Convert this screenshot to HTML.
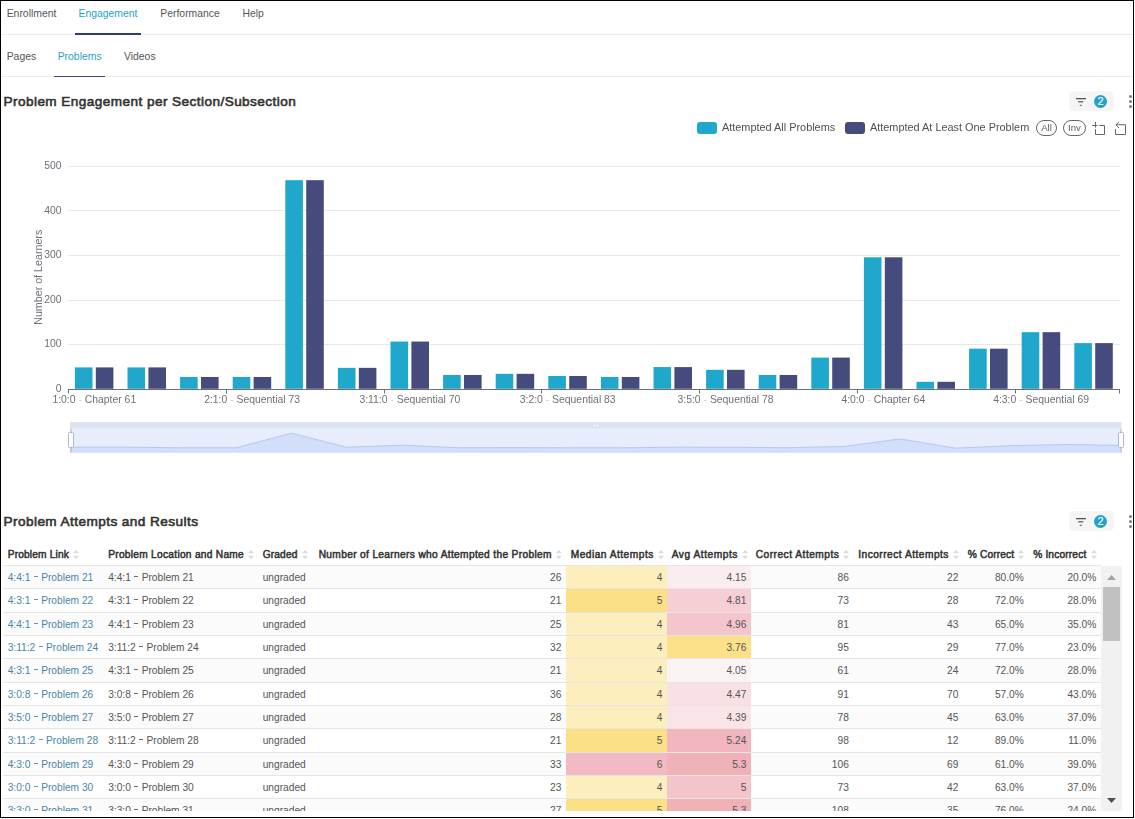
<!DOCTYPE html>
<html><head><meta charset="utf-8">
<style>
html,body{margin:0;padding:0;background:#fff;width:1135px;height:819px;overflow:hidden;position:relative;font-family:"Liberation Sans",sans-serif;}
.abs{position:absolute;white-space:nowrap;}
.frame{position:absolute;left:0;top:0;width:1134px;height:818px;border:1px solid #000;box-sizing:border-box;pointer-events:none;z-index:10}
.tab{position:absolute;font-size:10.4px;color:#555;white-space:nowrap;line-height:12px}
.tab.act{color:#25A3CA}
.line{position:absolute;height:1px;background:#ECECEC}
.ul{position:absolute;height:2px;background:#2F3B6E}
.title{position:absolute;font-size:13.6px;letter-spacing:0.43px;font-weight:normal;-webkit-text-stroke:0.6px #333;color:#333;white-space:nowrap;line-height:14px}
.fbtn{position:absolute;width:45px;height:20px;background:#F5F5F5;border-radius:5px}
.badge{position:absolute;width:13px;height:13px;border-radius:50%;background:#21A3C9;color:#fff;font-size:11px;text-align:center;line-height:13.5px;-webkit-text-stroke:0.1px #fff}
.dot{position:absolute;width:3px;height:3px;border-radius:50%;background:#73808C}
svg text.ax{font-family:"Liberation Sans",sans-serif;font-size:10.4px;fill:#6E7079}
.leg{position:absolute;will-change:transform;font-size:10.9px;color:#505050;white-space:nowrap;line-height:12px}
.sw{position:absolute;width:20px;height:12px;border-radius:3px}
.pill{position:absolute;will-change:transform;border:1px solid #666;border-radius:8px;box-sizing:border-box;font-size:9.6px;color:#606060;text-align:center;line-height:14px}
.th{position:absolute;top:544px;height:22px;line-height:22px;font-size:10.2px;letter-spacing:0.15px;font-weight:normal;-webkit-text-stroke:0.5px #333;color:#333;padding-left:4.7px;box-sizing:border-box;white-space:nowrap}
.si{display:inline-block;margin-left:4px;vertical-align:-1px}
.tr{position:absolute;left:3px;width:1098px;height:23.35px;border-bottom:1px solid #E5E5E5;box-sizing:border-box}
.td{position:absolute;top:0;bottom:0;line-height:24.5px;font-size:10.2px;color:#555;padding:0 4.7px;box-sizing:border-box;white-space:nowrap;overflow:hidden;margin-left:-3px}
.td.r{text-align:right}
.dsh{display:inline-block;width:3.8px;height:0.9px;background:currentColor;vertical-align:4.0px;margin:0 3.4px 0 3.6px;opacity:0.85}
.td.lk{color:#4885AB}
.hb{position:absolute;left:3px;top:565px;width:1098px;height:1px;background:#E5E5E5}
.sb{position:absolute;left:1101px;top:566px;width:21px;height:245px;background:#F1F1F1}
.thumb{position:absolute;left:1103px;top:587px;width:17px;height:54px;background:#C1C1C1}
</style></head><body>
<div class="frame"></div>
<div class="tab" style="left:6.7px;top:8px">Enrollment</div>
<div class="tab act" style="left:78.5px;top:8px">Engagement</div>
<div class="tab" style="left:160.3px;top:8px">Performance</div>
<div class="tab" style="left:242.5px;top:8px">Help</div>
<div class="line" style="left:1px;top:34px;width:1132px"></div>
<div class="ul" style="left:75px;top:33px;width:66px"></div>
<div class="tab" style="left:6.7px;top:51px">Pages</div>
<div class="tab act" style="left:57.7px;top:51px">Problems</div>
<div class="tab" style="left:124px;top:51px">Videos</div>
<div class="line" style="left:1px;top:76px;width:1132px"></div>
<div class="ul" style="left:54px;top:76px;width:51px;height:1px;background:#3B467A"></div>
<div class="title" style="left:3.5px;top:95px">Problem Engagement per Section/Subsection</div>
<div class="fbtn" style="left:1069px;top:91px"></div>
<svg class="abs" style="left:1075px;top:97px" width="12" height="10" viewBox="0 0 12 10"><rect x="1" y="1" width="10" height="1.3" fill="#555"/><rect x="3.2" y="4.2" width="5.1" height="1.2" fill="#555"/><rect x="4.8" y="7.8" width="2" height="1" fill="#555"/></svg>
<div class="badge" style="left:1094px;top:95px">2</div>
<div class="dot" style="left:1129px;top:95px"></div>
<div class="dot" style="left:1129px;top:100px"></div>
<div class="dot" style="left:1129px;top:105px"></div>
<div class="sw" style="left:697px;top:122px;background:#20A7CC"></div>
<div class="leg" style="left:721.5px;top:120.5px">Attempted All Problems</div>
<div class="sw" style="left:845px;top:122px;background:#454C7D"></div>
<div class="leg" style="left:869.5px;top:120.5px">Attempted At Least One Problem</div>
<div class="pill" style="left:1036px;top:120px;width:21px;height:16px">All</div>
<div class="pill" style="left:1063px;top:120px;width:23px;height:16px">Inv</div>
<svg class="abs" style="left:0;top:0" width="1135" height="140" viewBox="0 0 1135 140">
<path d="M1092.3 125.5 H1097.6 M1095.5 122 V127.6 M1099.3 125.5 H1104.5 V134.5 H1095.5 V129.1" fill="none" stroke="#666" stroke-width="1"/>
<path d="M1115.5 129.1 V134.5 H1125.5 V124.7 H1116 M1119 121.8 L1115.9 124.9 L1119 128" fill="none" stroke="#666" stroke-width="1"/>
</svg>
<svg class="abs" style="left:0;top:0;will-change:transform" width="1135" height="470" viewBox="0 0 1135 470">
<line x1="68.0" y1="344.5" x2="1120.0" y2="344.5" stroke="#E4E9F2" stroke-width="1"/>
<line x1="68.0" y1="300.5" x2="1120.0" y2="300.5" stroke="#E4E9F2" stroke-width="1"/>
<line x1="68.0" y1="255.5" x2="1120.0" y2="255.5" stroke="#E4E9F2" stroke-width="1"/>
<line x1="68.0" y1="210.5" x2="1120.0" y2="210.5" stroke="#E4E9F2" stroke-width="1"/>
<line x1="68.0" y1="166.5" x2="1120.0" y2="166.5" stroke="#E4E9F2" stroke-width="1"/>
<rect x="74.90" y="367.40" width="17.6" height="21.40" fill="#20A7CC"/>
<rect x="95.80" y="367.40" width="17.6" height="21.40" fill="#454C7D"/>
<rect x="127.50" y="367.40" width="17.6" height="21.40" fill="#20A7CC"/>
<rect x="148.40" y="367.40" width="17.6" height="21.40" fill="#454C7D"/>
<rect x="180.10" y="376.99" width="17.6" height="11.81" fill="#20A7CC"/>
<rect x="201.00" y="376.99" width="17.6" height="11.81" fill="#454C7D"/>
<rect x="232.70" y="376.99" width="17.6" height="11.81" fill="#20A7CC"/>
<rect x="253.60" y="376.99" width="17.6" height="11.81" fill="#454C7D"/>
<rect x="285.30" y="180.17" width="17.6" height="208.63" fill="#20A7CC"/>
<rect x="306.20" y="180.17" width="17.6" height="208.63" fill="#454C7D"/>
<rect x="337.90" y="367.85" width="17.6" height="20.95" fill="#20A7CC"/>
<rect x="358.80" y="367.85" width="17.6" height="20.95" fill="#454C7D"/>
<rect x="390.50" y="341.55" width="17.6" height="47.25" fill="#20A7CC"/>
<rect x="411.40" y="341.55" width="17.6" height="47.25" fill="#454C7D"/>
<rect x="443.10" y="374.98" width="17.6" height="13.82" fill="#20A7CC"/>
<rect x="464.00" y="374.98" width="17.6" height="13.82" fill="#454C7D"/>
<rect x="495.70" y="373.82" width="17.6" height="14.98" fill="#20A7CC"/>
<rect x="516.60" y="373.82" width="17.6" height="14.98" fill="#454C7D"/>
<rect x="548.30" y="376.01" width="17.6" height="12.79" fill="#20A7CC"/>
<rect x="569.20" y="376.01" width="17.6" height="12.79" fill="#454C7D"/>
<rect x="600.90" y="376.99" width="17.6" height="11.81" fill="#20A7CC"/>
<rect x="621.80" y="376.99" width="17.6" height="11.81" fill="#454C7D"/>
<rect x="653.50" y="367.09" width="17.6" height="21.71" fill="#20A7CC"/>
<rect x="674.40" y="367.09" width="17.6" height="21.71" fill="#454C7D"/>
<rect x="706.10" y="369.81" width="17.6" height="18.99" fill="#20A7CC"/>
<rect x="727.00" y="369.81" width="17.6" height="18.99" fill="#454C7D"/>
<rect x="758.70" y="374.98" width="17.6" height="13.82" fill="#20A7CC"/>
<rect x="779.60" y="374.98" width="17.6" height="13.82" fill="#454C7D"/>
<rect x="811.30" y="357.59" width="17.6" height="31.21" fill="#20A7CC"/>
<rect x="832.20" y="357.59" width="17.6" height="31.21" fill="#454C7D"/>
<rect x="863.90" y="257.29" width="17.6" height="131.51" fill="#20A7CC"/>
<rect x="884.80" y="257.29" width="17.6" height="131.51" fill="#454C7D"/>
<rect x="916.50" y="381.80" width="17.6" height="7.00" fill="#20A7CC"/>
<rect x="937.40" y="381.80" width="17.6" height="7.00" fill="#454C7D"/>
<rect x="969.10" y="348.68" width="17.6" height="40.12" fill="#20A7CC"/>
<rect x="990.00" y="348.68" width="17.6" height="40.12" fill="#454C7D"/>
<rect x="1021.70" y="332.18" width="17.6" height="56.62" fill="#20A7CC"/>
<rect x="1042.60" y="332.18" width="17.6" height="56.62" fill="#454C7D"/>
<rect x="1074.30" y="343.11" width="17.6" height="45.69" fill="#20A7CC"/>
<rect x="1095.20" y="343.11" width="17.6" height="45.69" fill="#454C7D"/>
<line x1="68.0" y1="389.5" x2="1120.0" y2="389.5" stroke="#6E7079" stroke-width="1"/>
<line x1="68.5" y1="389.5" x2="68.5" y2="393.5" stroke="#6E7079" stroke-width="1"/>
<line x1="226.5" y1="389.5" x2="226.5" y2="393.5" stroke="#6E7079" stroke-width="1"/>
<line x1="384.5" y1="389.5" x2="384.5" y2="393.5" stroke="#6E7079" stroke-width="1"/>
<line x1="541.5" y1="389.5" x2="541.5" y2="393.5" stroke="#6E7079" stroke-width="1"/>
<line x1="699.5" y1="389.5" x2="699.5" y2="393.5" stroke="#6E7079" stroke-width="1"/>
<line x1="857.5" y1="389.5" x2="857.5" y2="393.5" stroke="#6E7079" stroke-width="1"/>
<line x1="1015.5" y1="389.5" x2="1015.5" y2="393.5" stroke="#6E7079" stroke-width="1"/>
<line x1="1119.5" y1="389.5" x2="1119.5" y2="393.5" stroke="#6E7079" stroke-width="1"/>
<text x="61.5" y="391.9" text-anchor="end" class="ax">0</text>
<text x="61.5" y="347.3" text-anchor="end" class="ax">100</text>
<text x="61.5" y="302.7" text-anchor="end" class="ax">200</text>
<text x="61.5" y="258.2" text-anchor="end" class="ax">300</text>
<text x="61.5" y="213.6" text-anchor="end" class="ax">400</text>
<text x="61.5" y="169.0" text-anchor="end" class="ax">500</text>
<text x="94.3" y="403.0" text-anchor="middle" class="ax">1:0:0 <tspan fill-opacity="0.35">-</tspan> Chapter 61</text>
<text x="252.1" y="403.0" text-anchor="middle" class="ax">2:1:0 <tspan fill-opacity="0.35">-</tspan> Sequential 73</text>
<text x="409.9" y="403.0" text-anchor="middle" class="ax">3:11:0 <tspan fill-opacity="0.35">-</tspan> Sequential 70</text>
<text x="567.7" y="403.0" text-anchor="middle" class="ax">3:2:0 <tspan fill-opacity="0.35">-</tspan> Sequential 83</text>
<text x="725.5" y="403.0" text-anchor="middle" class="ax">3:5:0 <tspan fill-opacity="0.35">-</tspan> Sequential 78</text>
<text x="883.3" y="403.0" text-anchor="middle" class="ax">4:0:0 <tspan fill-opacity="0.35">-</tspan> Chapter 64</text>
<text x="1041.1" y="403.0" text-anchor="middle" class="ax">4:3:0 <tspan fill-opacity="0.35">-</tspan> Sequential 69</text>
<text transform="translate(41.5,277.3) rotate(-90)" text-anchor="middle" class="ax" style="font-size:10.7px">Number of Learners</text>
<rect x="70.0" y="422" width="1051.5" height="6.7" fill="#DDE3F1"/>
<rect x="70.0" y="428.7" width="1051.5" height="24" fill="#E7EDFC"/>
<polygon points="70.0,452.7 70.0,447.1 125.3,447.1 180.7,447.8 236.0,447.8 291.4,433.2 346.7,447.2 402.1,445.2 457.4,447.7 512.7,447.6 568.1,447.8 623.4,447.8 678.8,447.1 734.1,447.3 789.4,447.7 844.8,446.4 900.1,438.9 955.5,448.2 1010.8,445.7 1066.2,444.5 1121.5,445.3 1121.5,452.7" fill="#D2DEFA"/>
<polyline points="70.0,447.1 125.3,447.1 180.7,447.8 236.0,447.8 291.4,433.2 346.7,447.2 402.1,445.2 457.4,447.7 512.7,447.6 568.1,447.8 623.4,447.8 678.8,447.1 734.1,447.3 789.4,447.7 844.8,446.4 900.1,438.9 955.5,448.2 1010.8,445.7 1066.2,444.5 1121.5,445.3" fill="none" stroke="#B5C8F2" stroke-width="1"/>
<line x1="71.0" y1="428.7" x2="71.0" y2="452.7" stroke="#ACB8D1" stroke-width="1"/>
<rect x="68.5" y="432.5" width="5" height="15" rx="1" fill="#fff" stroke="#ACB8D1" stroke-width="1"/>
<line x1="1121.0" y1="428.7" x2="1121.0" y2="452.7" stroke="#ACB8D1" stroke-width="1"/>
<rect x="1118.5" y="432.5" width="5" height="15" rx="1" fill="#fff" stroke="#ACB8D1" stroke-width="1"/>
<circle cx="594.5" cy="425.2" r="0.8" fill="#fff"/><circle cx="597.5" cy="425.2" r="0.8" fill="#fff"/>
</svg>
<div class="title" style="left:3.5px;top:515px">Problem Attempts and Results</div>
<div class="fbtn" style="left:1069px;top:511px"></div>
<svg class="abs" style="left:1075px;top:517px" width="12" height="10" viewBox="0 0 12 10"><rect x="1" y="1" width="10" height="1.3" fill="#555"/><rect x="3.2" y="4.2" width="5.1" height="1.2" fill="#555"/><rect x="4.8" y="7.8" width="2" height="1" fill="#555"/></svg>
<div class="badge" style="left:1094px;top:515px">2</div>
<div class="dot" style="left:1129px;top:515px"></div>
<div class="dot" style="left:1129px;top:520px"></div>
<div class="dot" style="left:1129px;top:525px"></div>
<div class="th" style="left:3px;width:100.5px;letter-spacing:0.15px">Problem Link<svg class="si" style="margin-left:4.15px" width="6" height="9" viewBox="0 0 6 9"><path d="M3 0 L6 3.3 L0 3.3Z M3 9 L6 5.7 L0 5.7Z" fill="#DADADA"/></svg></div><div class="th" style="left:103.5px;width:154.5px;letter-spacing:0.27px">Problem Location and Name<svg class="si" style="margin-left:4.03px" width="6" height="9" viewBox="0 0 6 9"><path d="M3 0 L6 3.3 L0 3.3Z M3 9 L6 5.7 L0 5.7Z" fill="#DADADA"/></svg></div><div class="th" style="left:258px;width:56px;letter-spacing:0.15px">Graded<svg class="si" style="margin-left:4.15px" width="6" height="9" viewBox="0 0 6 9"><path d="M3 0 L6 3.3 L0 3.3Z M3 9 L6 5.7 L0 5.7Z" fill="#DADADA"/></svg></div><div class="th" style="left:314px;width:252px;letter-spacing:0.33px">Number of Learners who Attempted the Problem<svg class="si" style="margin-left:3.97px" width="6" height="9" viewBox="0 0 6 9"><path d="M3 0 L6 3.3 L0 3.3Z M3 9 L6 5.7 L0 5.7Z" fill="#DADADA"/></svg></div><div class="th" style="left:566px;width:101px;letter-spacing:0.48px">Median Attempts<svg class="si" style="margin-left:3.82px" width="6" height="9" viewBox="0 0 6 9"><path d="M3 0 L6 3.3 L0 3.3Z M3 9 L6 5.7 L0 5.7Z" fill="#DADADA"/></svg></div><div class="th" style="left:667px;width:84px;letter-spacing:0.53px">Avg Attempts<svg class="si" style="margin-left:3.77px" width="6" height="9" viewBox="0 0 6 9"><path d="M3 0 L6 3.3 L0 3.3Z M3 9 L6 5.7 L0 5.7Z" fill="#DADADA"/></svg></div><div class="th" style="left:751px;width:102.5px;letter-spacing:0.49px">Correct Attempts<svg class="si" style="margin-left:3.81px" width="6" height="9" viewBox="0 0 6 9"><path d="M3 0 L6 3.3 L0 3.3Z M3 9 L6 5.7 L0 5.7Z" fill="#DADADA"/></svg></div><div class="th" style="left:853.5px;width:109.5px;letter-spacing:0.48px">Incorrect Attempts<svg class="si" style="margin-left:3.82px" width="6" height="9" viewBox="0 0 6 9"><path d="M3 0 L6 3.3 L0 3.3Z M3 9 L6 5.7 L0 5.7Z" fill="#DADADA"/></svg></div><div class="th" style="left:963px;width:65.5px;letter-spacing:0.15px">% Correct<svg class="si" style="margin-left:4.15px" width="6" height="9" viewBox="0 0 6 9"><path d="M3 0 L6 3.3 L0 3.3Z M3 9 L6 5.7 L0 5.7Z" fill="#DADADA"/></svg></div><div class="th" style="left:1028.5px;width:72.5px;letter-spacing:0.15px">% Incorrect<svg class="si" style="margin-left:4.15px" width="6" height="9" viewBox="0 0 6 9"><path d="M3 0 L6 3.3 L0 3.3Z M3 9 L6 5.7 L0 5.7Z" fill="#DADADA"/></svg></div>
<div class="abs" style="left:0;top:565px;width:1135px;height:246px;overflow:hidden">
<div style="position:absolute;left:0;top:-565px;width:1135px;height:900px">
<div class="tr" style="top:566px;height:23px;background:#FBFBFB"><div class="td lk" style="left:3px;width:100.5px">4:4:1<i class="dsh"></i>Problem 21</div><div class="td" style="left:103.5px;width:154.5px">4:4:1<i class="dsh"></i>Problem 21</div><div class="td" style="left:258px;width:56px">ungraded</div><div class="td r" style="left:314px;width:252px">26</div><div class="td r" style="left:566px;width:101px;background:#FCEEBD">4</div><div class="td r" style="left:667px;width:84px;background:#F9EDEF">4.15</div><div class="td r" style="left:751px;width:102.5px">86</div><div class="td r" style="left:853.5px;width:109.5px">22</div><div class="td r" style="left:963px;width:65.5px">80.0%</div><div class="td r" style="left:1028.5px;width:72.5px">20.0%</div></div>
<div class="tr" style="top:589px;height:24px;background:#FFFFFF"><div class="td lk" style="left:3px;width:100.5px">4:3:1<i class="dsh"></i>Problem 22</div><div class="td" style="left:103.5px;width:154.5px">4:3:1<i class="dsh"></i>Problem 22</div><div class="td" style="left:258px;width:56px">ungraded</div><div class="td r" style="left:314px;width:252px">21</div><div class="td r" style="left:566px;width:101px;background:#FCE085">5</div><div class="td r" style="left:667px;width:84px;background:#F6CFD5">4.81</div><div class="td r" style="left:751px;width:102.5px">73</div><div class="td r" style="left:853.5px;width:109.5px">28</div><div class="td r" style="left:963px;width:65.5px">72.0%</div><div class="td r" style="left:1028.5px;width:72.5px">28.0%</div></div>
<div class="tr" style="top:613px;height:23px;background:#FBFBFB"><div class="td lk" style="left:3px;width:100.5px">4:4:1<i class="dsh"></i>Problem 23</div><div class="td" style="left:103.5px;width:154.5px">4:4:1<i class="dsh"></i>Problem 23</div><div class="td" style="left:258px;width:56px">ungraded</div><div class="td r" style="left:314px;width:252px">25</div><div class="td r" style="left:566px;width:101px;background:#FCEEBD">4</div><div class="td r" style="left:667px;width:84px;background:#F4C5CC">4.96</div><div class="td r" style="left:751px;width:102.5px">81</div><div class="td r" style="left:853.5px;width:109.5px">43</div><div class="td r" style="left:963px;width:65.5px">65.0%</div><div class="td r" style="left:1028.5px;width:72.5px">35.0%</div></div>
<div class="tr" style="top:636px;height:23px;background:#FFFFFF"><div class="td lk" style="left:3px;width:100.5px">3:11:2<i class="dsh"></i>Problem 24</div><div class="td" style="left:103.5px;width:154.5px">3:11:2<i class="dsh"></i>Problem 24</div><div class="td" style="left:258px;width:56px">ungraded</div><div class="td r" style="left:314px;width:252px">32</div><div class="td r" style="left:566px;width:101px;background:#FCEEBD">4</div><div class="td r" style="left:667px;width:84px;background:#FCE18A">3.76</div><div class="td r" style="left:751px;width:102.5px">95</div><div class="td r" style="left:853.5px;width:109.5px">29</div><div class="td r" style="left:963px;width:65.5px">77.0%</div><div class="td r" style="left:1028.5px;width:72.5px">23.0%</div></div>
<div class="tr" style="top:659px;height:24px;background:#FBFBFB"><div class="td lk" style="left:3px;width:100.5px">4:3:1<i class="dsh"></i>Problem 25</div><div class="td" style="left:103.5px;width:154.5px">4:3:1<i class="dsh"></i>Problem 25</div><div class="td" style="left:258px;width:56px">ungraded</div><div class="td r" style="left:314px;width:252px">21</div><div class="td r" style="left:566px;width:101px;background:#FCEEBD">4</div><div class="td r" style="left:667px;width:84px;background:#FAF3F4">4.05</div><div class="td r" style="left:751px;width:102.5px">61</div><div class="td r" style="left:853.5px;width:109.5px">24</div><div class="td r" style="left:963px;width:65.5px">72.0%</div><div class="td r" style="left:1028.5px;width:72.5px">28.0%</div></div>
<div class="tr" style="top:683px;height:23px;background:#FFFFFF"><div class="td lk" style="left:3px;width:100.5px">3:0:8<i class="dsh"></i>Problem 26</div><div class="td" style="left:103.5px;width:154.5px">3:0:8<i class="dsh"></i>Problem 26</div><div class="td" style="left:258px;width:56px">ungraded</div><div class="td r" style="left:314px;width:252px">36</div><div class="td r" style="left:566px;width:101px;background:#FCEEBD">4</div><div class="td r" style="left:667px;width:84px;background:#F8E0E4">4.47</div><div class="td r" style="left:751px;width:102.5px">91</div><div class="td r" style="left:853.5px;width:109.5px">70</div><div class="td r" style="left:963px;width:65.5px">57.0%</div><div class="td r" style="left:1028.5px;width:72.5px">43.0%</div></div>
<div class="tr" style="top:706px;height:23px;background:#FBFBFB"><div class="td lk" style="left:3px;width:100.5px">3:5:0<i class="dsh"></i>Problem 27</div><div class="td" style="left:103.5px;width:154.5px">3:5:0<i class="dsh"></i>Problem 27</div><div class="td" style="left:258px;width:56px">ungraded</div><div class="td r" style="left:314px;width:252px">28</div><div class="td r" style="left:566px;width:101px;background:#FCEEBD">4</div><div class="td r" style="left:667px;width:84px;background:#F9E5E8">4.39</div><div class="td r" style="left:751px;width:102.5px">78</div><div class="td r" style="left:853.5px;width:109.5px">45</div><div class="td r" style="left:963px;width:65.5px">63.0%</div><div class="td r" style="left:1028.5px;width:72.5px">37.0%</div></div>
<div class="tr" style="top:729px;height:24px;background:#FFFFFF"><div class="td lk" style="left:3px;width:100.5px">3:11:2<i class="dsh"></i>Problem 28</div><div class="td" style="left:103.5px;width:154.5px">3:11:2<i class="dsh"></i>Problem 28</div><div class="td" style="left:258px;width:56px">ungraded</div><div class="td r" style="left:314px;width:252px">21</div><div class="td r" style="left:566px;width:101px;background:#FCE085">5</div><div class="td r" style="left:667px;width:84px;background:#F1B6BE">5.24</div><div class="td r" style="left:751px;width:102.5px">98</div><div class="td r" style="left:853.5px;width:109.5px">12</div><div class="td r" style="left:963px;width:65.5px">89.0%</div><div class="td r" style="left:1028.5px;width:72.5px">11.0%</div></div>
<div class="tr" style="top:753px;height:23px;background:#FBFBFB"><div class="td lk" style="left:3px;width:100.5px">4:3:0<i class="dsh"></i>Problem 29</div><div class="td" style="left:103.5px;width:154.5px">4:3:0<i class="dsh"></i>Problem 29</div><div class="td" style="left:258px;width:56px">ungraded</div><div class="td r" style="left:314px;width:252px">33</div><div class="td r" style="left:566px;width:101px;background:#F2BBC3">6</div><div class="td r" style="left:667px;width:84px;background:#F0B1B9">5.3</div><div class="td r" style="left:751px;width:102.5px">106</div><div class="td r" style="left:853.5px;width:109.5px">69</div><div class="td r" style="left:963px;width:65.5px">61.0%</div><div class="td r" style="left:1028.5px;width:72.5px">39.0%</div></div>
<div class="tr" style="top:776px;height:23px;background:#FFFFFF"><div class="td lk" style="left:3px;width:100.5px">3:0:0<i class="dsh"></i>Problem 30</div><div class="td" style="left:103.5px;width:154.5px">3:0:0<i class="dsh"></i>Problem 30</div><div class="td" style="left:258px;width:56px">ungraded</div><div class="td r" style="left:314px;width:252px">23</div><div class="td r" style="left:566px;width:101px;background:#FCEEBD">4</div><div class="td r" style="left:667px;width:84px;background:#F4C4CB">5</div><div class="td r" style="left:751px;width:102.5px">73</div><div class="td r" style="left:853.5px;width:109.5px">42</div><div class="td r" style="left:963px;width:65.5px">63.0%</div><div class="td r" style="left:1028.5px;width:72.5px">37.0%</div></div>
<div class="tr" style="top:799px;height:23px;background:#FBFBFB"><div class="td lk" style="left:3px;width:100.5px">3:3:0<i class="dsh"></i>Problem 31</div><div class="td" style="left:103.5px;width:154.5px">3:3:0<i class="dsh"></i>Problem 31</div><div class="td" style="left:258px;width:56px">ungraded</div><div class="td r" style="left:314px;width:252px">27</div><div class="td r" style="left:566px;width:101px;background:#FCE085">5</div><div class="td r" style="left:667px;width:84px;background:#F0B1B9">5.3</div><div class="td r" style="left:751px;width:102.5px">108</div><div class="td r" style="left:853.5px;width:109.5px">35</div><div class="td r" style="left:963px;width:65.5px">76.0%</div><div class="td r" style="left:1028.5px;width:72.5px">24.0%</div></div>
</div></div>
<div class="hb"></div>
<div class="sb"></div>
<div class="thumb"></div>
<svg class="abs" style="left:1101px;top:566px" width="21" height="245" viewBox="0 0 21 245"><path d="M6 14 L10.5 9 L15 14Z" fill="#A3A3A3"/><path d="M6 232 L10.5 237 L15 232Z" fill="#505050"/></svg>
</body></html>
